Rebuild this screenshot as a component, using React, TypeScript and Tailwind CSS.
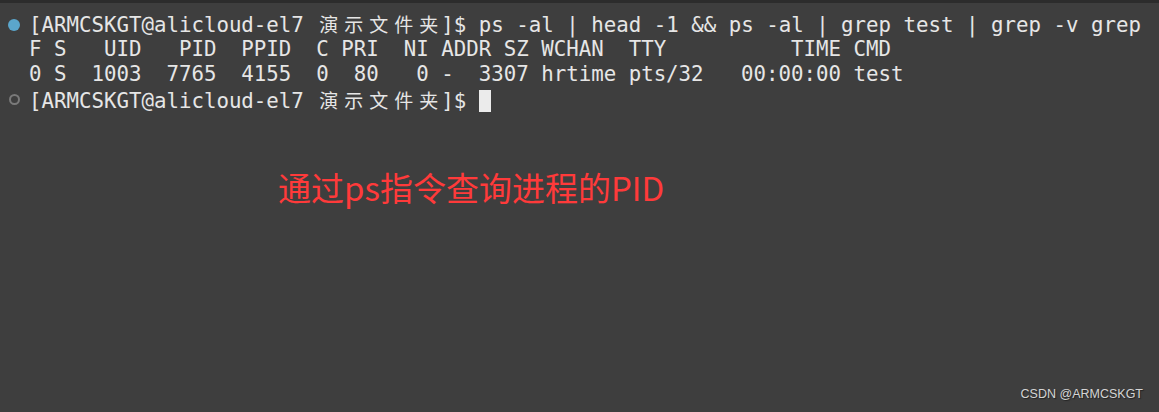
const mono = "font-['DejaVu_Sans_Mono','Liberation_Mono','Noto_Sans_CJK_SC',monospace]";

function Cjk({ text }: { text: string }) {
  return (
    <>
      {text.split("").map((c, i) => (
        <span
          key={i}
          className="inline-block w-[25px] text-center font-['Noto_Sans_CJK_SC',sans-serif] text-[19px]"
        >
          {c}
        </span>
      ))}
    </>
  );
}

function Line({
  dot,
  children,
}: {
  dot?: "active" | "idle";
  children: React.ReactNode;
}) {
  return (
    <div className="flex h-[25px] items-center">
      <div className="flex w-[29px] shrink-0 justify-center pr-[1px]">
        {dot === "active" && (
          <span className="h-[12px] w-[12px] rounded-full bg-[#5ba6cc]" />
        )}
        {dot === "idle" && (
          <span className="h-[11px] w-[11px] rounded-full border-2 border-[#7a7a7a]" />
        )}
      </div>
      <div className="whitespace-pre">{children}</div>
    </div>
  );
}

export default function App() {
  const prompt = (
    <>
      {"[ARMCSKGT@alicloud-el7 "}
      <Cjk text="演示文件夹" />
      {"]$ "}
    </>
  );

  return (
    <div className="relative h-[412px] w-[1159px] overflow-hidden border-t-[3px] border-[#2c2c2c] bg-[#3e3e3e]">
      <div className={`${mono} pt-[9px] text-[20.75px] leading-[25px] text-[#e6e6e6]`}>
        <Line dot="active">
          {prompt}
          ps -al | head -1 &amp;&amp; ps -al | grep test | grep -v grep
        </Line>
        <Line>F S   UID   PID  PPID  C PRI  NI ADDR SZ WCHAN  TTY          TIME CMD</Line>
        <Line>0 S  1003  7765  4155  0  80   0 -  3307 hrtime pts/32   00:00:00 test</Line>
        <Line dot="idle">
          {prompt}
          <span className="inline-block h-[22px] w-[12px] translate-y-[4px] bg-[#ebebeb]" />
        </Line>
      </div>

      <p className="ml-[278px] mt-[55px] font-['Microsoft_YaHei','Noto_Sans_CJK_SC',sans-serif] text-[33px] leading-[40px] text-[#ff3a3a]">
        通过ps指令查询进程的PID
      </p>

      <span className="absolute bottom-[8px] right-[16px] font-['Liberation_Sans',Arial,sans-serif] text-[12.5px] text-[#d4d4d4] [text-shadow:1px_1px_1px_#222]">
        CSDN @ARMCSKGT
      </span>
    </div>
  );
}
